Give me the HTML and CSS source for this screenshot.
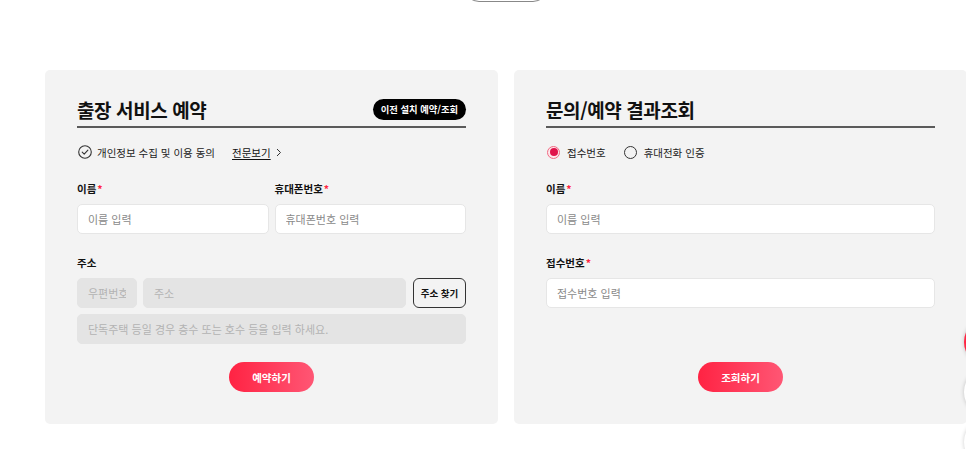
FILE: index.html
```html
<!DOCTYPE html>
<html lang="ko">
<head>
    <meta charset="UTF-8">
    <meta name="viewport" content="width=device-width, initial-scale=1.0">
    <title>출장 서비스 예약</title>
    <link rel="stylesheet" href="styles.css">
</head>
<body>
    <div class="wrap">
        <div class="top-more">
            <span class="more-btn"></span>
        </div>

        <div class="panels">
            <!-- 출장 서비스 예약 -->
            <section class="panel">
                <div class="panel-head">
                    <h2>출장 서비스 예약</h2>
                    <a href="#" class="badge">이전 설치 예약/조회</a>
                </div>

                <div class="agree-row">
                    <label class="agree">
                        <svg width="14" height="14" viewBox="0 0 14 14">
                            <circle cx="7" cy="7" r="6.3" fill="none" stroke="#333" stroke-width="1.1"/>
                            <path d="M4.2 7.2 L6.2 9.1 L9.9 5.2" fill="none" stroke="#333" stroke-width="1.1" stroke-linecap="round" stroke-linejoin="round"/>
                        </svg>
                        개인정보 수집 및 이용 동의
                    </label>
                    <a href="#" class="view-all">전문보기</a>
                    <svg class="chev" width="6" height="9" viewBox="0 0 6 9">
                        <path d="M1 1 L4.5 4.5 L1 8" fill="none" stroke="#333" stroke-width="1"/>
                    </svg>
                </div>

                <div class="field-row two">
                    <div class="field">
                        <label class="field-label">이름<span class="req">*</span></label>
                        <input type="text" class="text-input" placeholder="이름 입력">
                    </div>
                    <div class="field">
                        <label class="field-label">휴대폰번호<span class="req">*</span></label>
                        <input type="text" class="text-input" placeholder="휴대폰번호 입력">
                    </div>
                </div>

                <div class="field addr">
                    <label class="field-label">주소</label>
                    <div class="addr-row">
                        <input type="text" class="text-input disabled zip" placeholder="우편번호" disabled>
                        <input type="text" class="text-input disabled" placeholder="주소" disabled>
                        <button type="button" class="find-btn">주소 찾기</button>
                    </div>
                    <input type="text" class="text-input disabled" placeholder="단독주택 등일 경우 층수 또는 호수 등을 입력 하세요." disabled>
                </div>

                <div class="submit-row">
                    <button type="button" class="submit-btn">예약하기</button>
                </div>
            </section>

            <!-- 문의/예약 결과조회 -->
            <section class="panel">
                <div class="panel-head">
                    <h2>문의/예약 결과조회</h2>
                </div>

                <div class="radio-row">
                    <label class="radio on"><span class="dot"></span>접수번호</label>
                    <label class="radio"><span class="dot"></span>휴대전화 인증</label>
                </div>

                <div class="field-row">
                    <div class="field">
                        <label class="field-label">이름<span class="req">*</span></label>
                        <input type="text" class="text-input" placeholder="이름 입력">
                    </div>
                </div>

                <div class="field addr">
                    <label class="field-label">접수번호<span class="req">*</span></label>
                    <input type="text" class="text-input" placeholder="접수번호 입력">
                </div>

                <div class="submit-row">
                    <button type="button" class="submit-btn">조회하기</button>
                </div>
            </section>
        </div>
    </div>

    <!-- floating quick buttons -->
    <div class="quick">
        <span class="quick-btn red"></span>
        <span class="quick-btn"></span>
        <span class="quick-btn"></span>
    </div>
</body>
</html>
```

FILE: styles.css
```css
/* General */
body {
    margin: 0;
    background-color: #fff;
    font-family: "Noto Sans CJK KR", "Noto Sans", sans-serif;
    color: #111;
    overflow: hidden;
}

.wrap {
    width: 922px;
    margin-left: 45px;
}

/* top pill button (cut off by the window) */
.top-more {
    display: flex;
    justify-content: center;
    height: 70px;
}

.more-btn {
    display: block;
    box-sizing: border-box;
    width: 84px;
    height: 30px;
    margin-top: -28px;
    border: 1px solid #888;
    border-radius: 15px;
    background: #fff;
}

.panels {
    display: grid;
    grid-template-columns: 1fr 1fr;
    gap: 16px;
}

.panel {
    display: flex;
    flex-direction: column;
    background-color: #f3f3f3;
    border-radius: 5px;
    padding: 26px 32px 32px;
}

.panel-head {
    display: flex;
    justify-content: space-between;
    align-items: center;
    border-bottom: 2px solid #5a5a5a;
    padding-bottom: 2px;
    height: 28px;
}

.panel-head h2 {
    margin: 0;
    font-size: 19px;
    font-weight: 700;
    line-height: 28px;
    letter-spacing: -0.4px;
}

.badge {
    display: inline-flex;
    align-items: center;
    height: 21px;
    padding: 0 8px;
    border-radius: 11px;
    background-color: #000;
    color: #fff;
    font-size: 9.3px;
    font-weight: 700;
    text-decoration: none;
    margin-bottom: 2px;
}

/* agree */
.agree-row {
    display: flex;
    align-items: center;
    height: 14px;
    margin-top: 17px;
    font-size: 10.5px;
    color: #222;
}

.agree {
    display: flex;
    align-items: center;
    gap: 5px;
    padding-left: 1px;
}

.view-all {
    margin-left: 17px;
    color: #111;
    font-size: 10.5px;
    text-decoration: underline;
    text-underline-offset: 2px;
}

.chev {
    margin-left: 5px;
}

/* radio */
.radio-row {
    display: flex;
    align-items: center;
    gap: 17px;
    height: 14px;
    margin-top: 17px;
    font-size: 10.5px;
    color: #222;
}

.radio {
    display: flex;
    align-items: center;
    gap: 7px;
    padding-left: 1px;
}

.radio .dot {
    width: 11px;
    height: 11px;
    border: 1.2px solid #333;
    border-radius: 50%;
    box-sizing: content-box;
    position: relative;
}

.radio.on .dot {
    border-color: #f26a83;
    background-color: #fde7eb;
}

.radio.on .dot::after {
    content: "";
    position: absolute;
    top: 1.5px;
    left: 1.5px;
    width: 8px;
    height: 8px;
    border-radius: 50%;
    background-color: #e0134a;
}

/* fields */
.field-row {
    margin-top: 23px;
}

.field-row.two {
    display: grid;
    grid-template-columns: 1fr 1fr;
    gap: 6px;
}

.field {
    display: flex;
    flex-direction: column;
}

.field.addr {
    margin-top: 22px;
}

.field-label {
    font-size: 10.5px;
    font-weight: 700;
    line-height: 14px;
    margin-bottom: 8px;
}

.req {
    color: #ff2442;
    margin-left: 1px;
}

.text-input {
    box-sizing: border-box;
    height: 30px;
    width: 100%;
    padding: 0 10px;
    border: 1px solid #e6e6e6;
    border-radius: 5px;
    background-color: #fff;
    font-family: inherit;
    font-size: 11px;
    color: #333;
}

.text-input::placeholder {
    color: #8a8a8a;
}

.text-input.disabled {
    background-color: #e4e4e4;
    border-color: #e4e4e4;
}

.text-input.disabled::placeholder {
    color: #b3b3b3;
}

.addr-row {
    display: flex;
    gap: 6px;
    margin-bottom: 6px;
}

.addr-row .zip {
    width: 60px;
    flex: none;
}

.find-btn {
    flex: none;
    width: 53px;
    height: 30px;
    margin-left: 1px;
    border: 1px solid #333;
    border-radius: 6px;
    background: transparent;
    font-family: inherit;
    font-size: 9.5px;
    font-weight: 700;
    color: #111;
    padding: 0;
}

/* submit */
.submit-row {
    display: flex;
    justify-content: center;
    margin-top: auto;
    padding-top: 18px;
}

.submit-btn {
    width: 85px;
    height: 30px;
    border: none;
    border-radius: 15px;
    background: linear-gradient(90deg, #ff2343, #ff5674);
    color: #fff;
    font-family: inherit;
    font-size: 10.5px;
    font-weight: 700;
    cursor: pointer;
}

/* floating quick menu */
.quick {
    position: fixed;
    right: -46px;
    top: 318px;
    display: flex;
    flex-direction: column;
    gap: 2px;
}

.quick-btn {
    width: 48px;
    height: 48px;
    border-radius: 50%;
    background-color: #fff;
    box-shadow: 0 0 4px rgba(0, 0, 0, 0.2);
}

.quick-btn.red {
    background-color: #ff2442;
}
```
